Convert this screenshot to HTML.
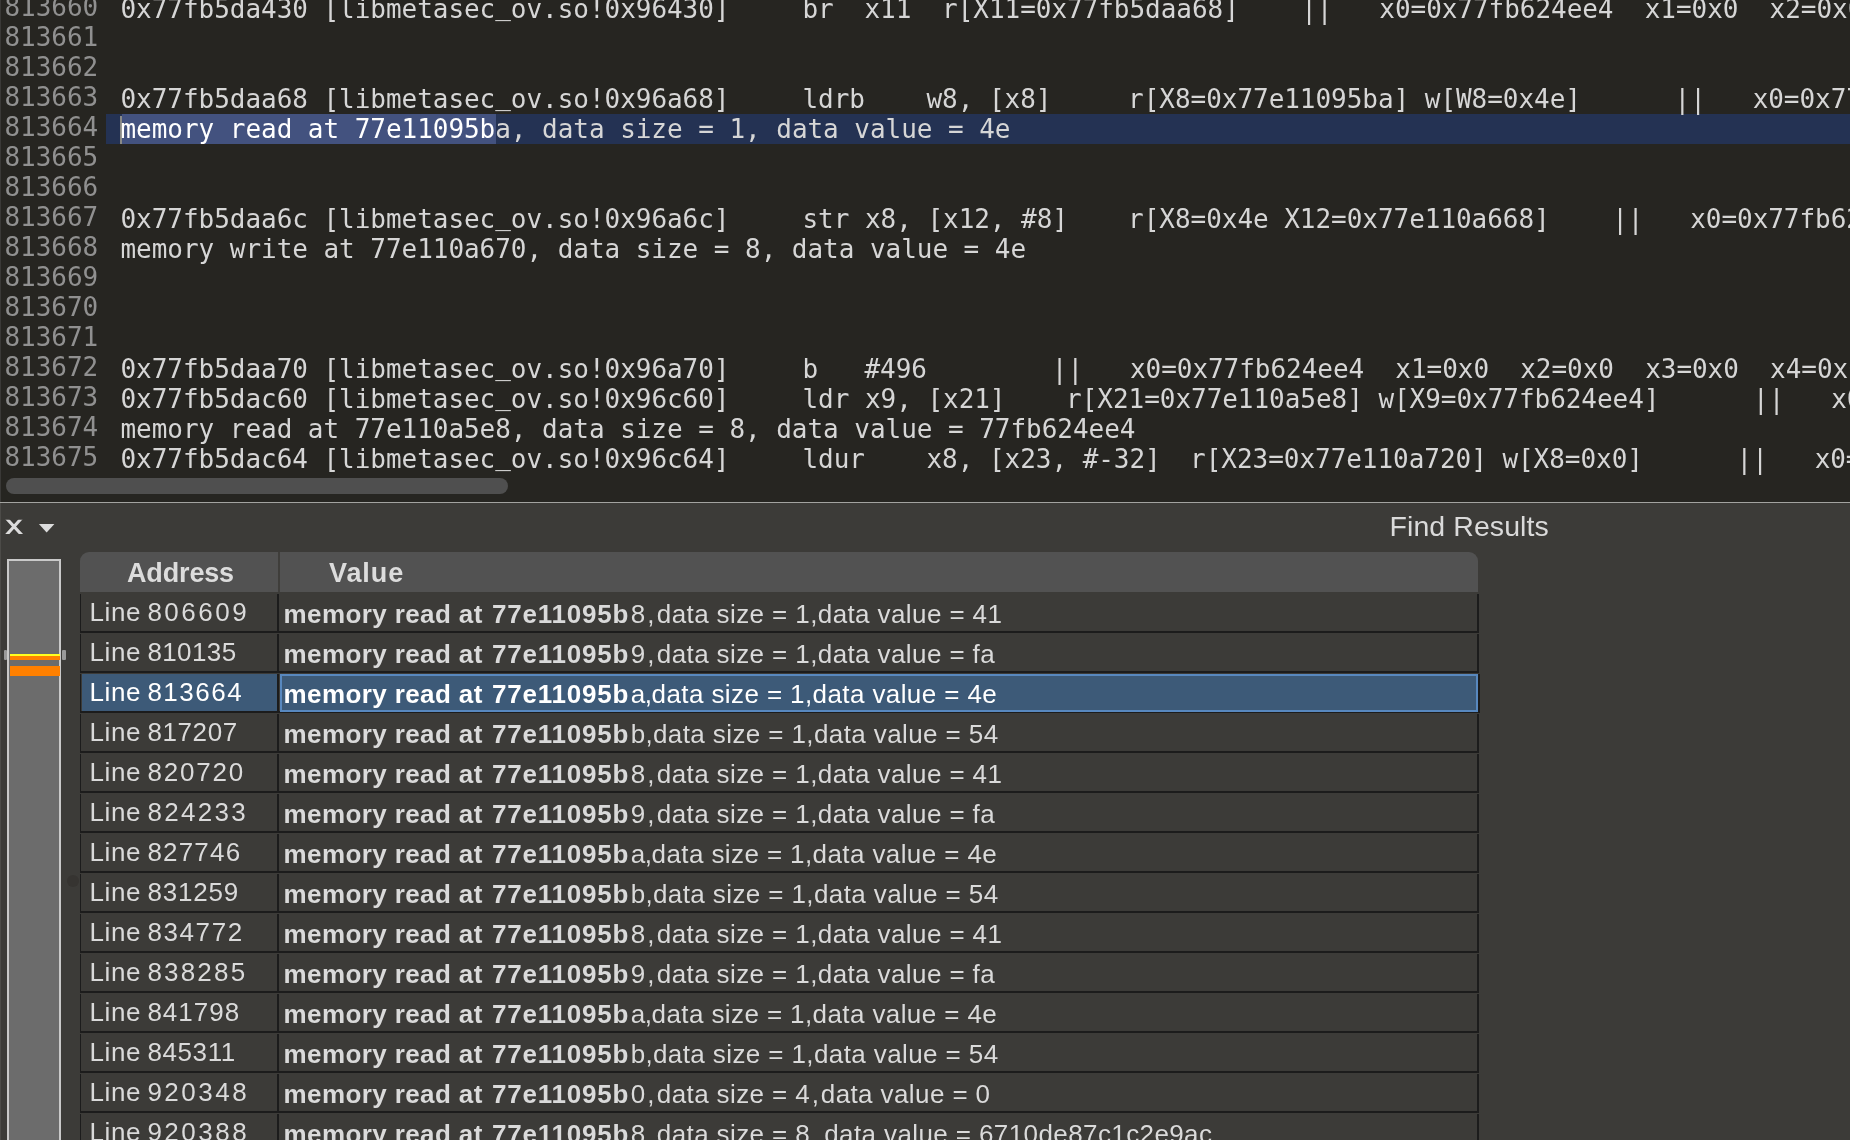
<!DOCTYPE html>
<html><head><meta charset="utf-8"><title>Find Results</title>
<style>
html,body{margin:0;padding:0}
body{width:1850px;height:1140px;overflow:hidden;position:relative;background:#3c3b38;font-family:"Liberation Sans",sans-serif}
#all{position:absolute;left:0;top:0;width:1850px;height:1140px;will-change:transform}
#ed{position:absolute;left:0;top:0;width:1850px;height:502px;background:#262521;overflow:hidden}
.ln,.tx{position:absolute;font-family:"DejaVu Sans Mono","Liberation Mono",monospace;font-size:26px;line-height:30px;height:30px;white-space:pre;letter-spacing:-0.04px}
.ln{left:4.5px;color:#909090;margin-top:-2px}
.tx{left:120.5px;color:#d6d6d6;tab-size:62px;-moz-tab-size:62px}
.us{position:relative;top:-3px}
#hl{position:absolute;left:106px;top:114px;width:1744px;height:30px;background:#243253}
#sel{position:absolute;left:121.5px;top:114px;width:374.5px;height:30px;background:#43527f}
#caret{position:absolute;left:120px;top:116px;width:2px;height:28px;background:#8a8a86}
#hs{position:absolute;left:6px;top:478px;width:502px;height:16px;border-radius:8px;background:#4f4f4f}
#edge1{position:absolute;left:0;top:0;width:1px;height:502px;background:#3a3937}
#edge2{position:absolute;left:0;top:503px;width:1px;height:637px;background:#4c4b48}
#sep{position:absolute;left:0;top:502px;width:1850px;height:1px;background:#a3a3a0}
#title{position:absolute;left:1389.5px;top:508px;font-size:28.5px;letter-spacing:.08px;line-height:36px;color:#dadada;white-space:pre}
#mm{position:absolute;left:7px;top:559px;width:50px;height:600px;border:2px solid #c9c9c9;background:#6c6c6c}
.or{position:absolute;left:10px;width:50px;background:#ff8000}
.hd{position:absolute;width:3.5px;top:650px;height:10px;background:#9a9a9a;border-radius:1px}
#th{position:absolute;left:80px;top:552px;width:1398px;height:40px;background:#525252;border-radius:9px 9px 0 0}
#thsep{position:absolute;left:278px;top:552px;width:2px;height:40px;background:#3f3e3b}
.h{position:absolute;top:552px;height:40px;line-height:42px;font-size:27px;font-weight:bold;color:#dcdcdc;white-space:pre;letter-spacing:.1px}
.r{position:absolute;left:80px;width:1399px;height:40px}
.r i{position:absolute;background:#1c1c1c;display:block}
.r .hb{left:0;top:38px;width:1399px;height:2px}
.r .v1{left:0;top:1px;width:1px;height:37px}
.r .v2{left:197px;top:1px;width:2px;height:37px}
.r .v3{left:1397px;top:1px;width:2px;height:37px}
.a,.v{position:absolute;white-space:pre;font-size:26px;color:#dadada;height:40px}
.a{left:9.5px;top:0;line-height:38px;letter-spacing:.6px;word-spacing:-1.5px}
.a span{letter-spacing:2.4px}
.v{left:203.5px;top:0;line-height:42px;letter-spacing:.4px}
.v u{text-decoration:none;letter-spacing:2.2px}
.v u.ca{letter-spacing:-.4px}
.v u.cb{letter-spacing:.3px}
.v b{letter-spacing:.4px;margin-right:1.5px}
.v b span{letter-spacing:.8px;margin-left:1.5px}
.s .a,.s .v{color:#fff}
.s .f1{position:absolute;left:2px;top:1px;width:195px;height:37.5px;background:#3d5a78}
.s .f2{position:absolute;left:200px;top:1px;width:1194px;height:34px;background:#3d5a78;border:2px solid #5888bf;z-index:2}
.s .v3{left:1398px;height:39px}
.a,.v{z-index:3}
</style></head><body>
<div id="all">
<div id="ed">
<div id="hl"></div><div id="sel"></div><div id="caret"></div>

<div class="ln" style="top:-6px">813660</div>
<div class="tx" style="top:-6px">0x77fb5da430 [libmetasec<span class="us">_</span>ov.so!0x96430]		br	x11	 r[X11=0x77fb5daa68]    ||   x0=0x77fb624ee4  x1=0x0  x2=0x0  x3=0x0</div>
<div class="ln" style="top:24px">813661</div>
<div class="ln" style="top:54px">813662</div>
<div class="ln" style="top:84px">813663</div>
<div class="tx" style="top:84px">0x77fb5daa68 [libmetasec<span class="us">_</span>ov.so!0x96a68]		ldrb	w8, [x8]	 r[X8=0x77e11095ba] w[W8=0x4e]      ||   x0=0x77fb624ee4</div>
<div class="ln" style="top:114px">813664</div>
<div class="tx" style="top:114px"><span style="color:#fff">memory read at 77e11095b</span>a, data size = 1, data value = 4e</div>
<div class="ln" style="top:144px">813665</div>
<div class="ln" style="top:174px">813666</div>
<div class="ln" style="top:204px">813667</div>
<div class="tx" style="top:204px">0x77fb5daa6c [libmetasec<span class="us">_</span>ov.so!0x96a6c]		str x8, [x12, #8]	 r[X8=0x4e X12=0x77e110a668]    ||   x0=0x77fb624ee4</div>
<div class="ln" style="top:234px">813668</div>
<div class="tx" style="top:234px">memory write at 77e110a670, data size = 8, data value = 4e</div>
<div class="ln" style="top:264px">813669</div>
<div class="ln" style="top:294px">813670</div>
<div class="ln" style="top:324px">813671</div>
<div class="ln" style="top:354px">813672</div>
<div class="tx" style="top:354px">0x77fb5daa70 [libmetasec<span class="us">_</span>ov.so!0x96a70]		b	#496        ||   x0=0x77fb624ee4  x1=0x0  x2=0x0  x3=0x0  x4=0x0</div>
<div class="ln" style="top:384px">813673</div>
<div class="tx" style="top:384px">0x77fb5dac60 [libmetasec<span class="us">_</span>ov.so!0x96c60]		ldr x9, [x21]	 r[X21=0x77e110a5e8] w[X9=0x77fb624ee4]      ||   x0=0x77fb624ee4</div>
<div class="ln" style="top:414px">813674</div>
<div class="tx" style="top:414px">memory read at 77e110a5e8, data size = 8, data value = 77fb624ee4</div>
<div class="ln" style="top:444px">813675</div>
<div class="tx" style="top:444px">0x77fb5dac64 [libmetasec<span class="us">_</span>ov.so!0x96c64]		ldur	x8, [x23, #-32]	 r[X23=0x77e110a720] w[X8=0x0]      ||   x0=0x77fb624ee4</div>
<div id="hs"></div><div id="edge1"></div>
</div>
<div id="sep"></div><div id="edge2"></div>
<svg style="position:absolute;left:4px;top:519px" width="52" height="17" viewBox="0 0 52 17"><defs><clipPath id="cx"><rect x="0" y="0.8" width="24" height="14.3"/></clipPath></defs><g clip-path="url(#cx)" stroke="#dcdcdc" stroke-width="3.1" fill="none"><path d="M2.13 -1 L18.75 17 M17.73 -1 L1.48 17"/></g><path d="M34.9 5 L50.4 5 L42.65 13.6 Z" fill="#dcdcdc"/></svg>
<div id="title">Find Results</div>
<div id="mm"></div>
<div class="or" style="top:654px;height:2px;background:#ffff20"></div>
<div class="or" style="top:656px;height:4px"></div>
<div class="or" style="top:666px;height:10px"></div>
<div class="hd" style="left:3.5px"></div><div class="hd" style="left:62px"></div>
<div style="position:absolute;left:67px;top:875px;width:12px;height:12px;border-radius:6px;background:#363431"></div>
<div id="th"></div><div id="thsep"></div>
<div class="h" style="left:127px;letter-spacing:-.15px">Address</div><div class="h" style="left:329px;letter-spacing:.9px">Value</div>

<div class="r" style="top:593px"><i class="hb"></i><i class="v1"></i><i class="v2"></i><i class="v3"></i><div class="a">Line <span style="letter-spacing:2.5px">806609</span></div><div class="v"><b>memory read at <span>77e11095b</span></b><u class="c8">8,</u>data size = 1,data value = 41</div></div>
<div class="r" style="top:633px"><i class="hb"></i><i class="v1"></i><i class="v2"></i><i class="v3"></i><div class="a">Line <span style="letter-spacing:0.4px">810135</span></div><div class="v"><b>memory read at <span>77e11095b</span></b><u class="c9">9,</u>data size = 1,data value = fa</div></div>
<div class="r s" style="top:673px"><div class="f1"></div><div class="f2"></div><i class="hb"></i><i class="v1"></i><i class="v2"></i><i class="v3"></i><div class="a">Line <span style="letter-spacing:1.52px">813664</span></div><div class="v"><b>memory read at <span>77e11095b</span></b><u class="ca">a,</u>data size = 1,data value = 4e</div></div>
<div class="r" style="top:713px"><i class="hb"></i><i class="v1"></i><i class="v2"></i><i class="v3"></i><div class="a">Line <span style="letter-spacing:0.6px">817207</span></div><div class="v"><b>memory read at <span>77e11095b</span></b><u class="cb">b,</u>data size = 1,data value = 54</div></div>
<div class="r" style="top:753px"><i class="hb"></i><i class="v1"></i><i class="v2"></i><i class="v3"></i><div class="a">Line <span style="letter-spacing:1.8px">820720</span></div><div class="v"><b>memory read at <span>77e11095b</span></b><u class="c8">8,</u>data size = 1,data value = 41</div></div>
<div class="r" style="top:793px"><i class="hb"></i><i class="v1"></i><i class="v2"></i><i class="v3"></i><div class="a">Line <span style="letter-spacing:2.32px">824233</span></div><div class="v"><b>memory read at <span>77e11095b</span></b><u class="c9">9,</u>data size = 1,data value = fa</div></div>
<div class="r" style="top:833px"><i class="hb"></i><i class="v1"></i><i class="v2"></i><i class="v3"></i><div class="a">Line <span style="letter-spacing:1.2px">827746</span></div><div class="v"><b>memory read at <span>77e11095b</span></b><u class="ca">a,</u>data size = 1,data value = 4e</div></div>
<div class="r" style="top:873px"><i class="hb"></i><i class="v1"></i><i class="v2"></i><i class="v3"></i><div class="a">Line <span style="letter-spacing:0.8px">831259</span></div><div class="v"><b>memory read at <span>77e11095b</span></b><u class="cb">b,</u>data size = 1,data value = 54</div></div>
<div class="r" style="top:913px"><i class="hb"></i><i class="v1"></i><i class="v2"></i><i class="v3"></i><div class="a">Line <span style="letter-spacing:1.6px">834772</span></div><div class="v"><b>memory read at <span>77e11095b</span></b><u class="c8">8,</u>data size = 1,data value = 41</div></div>
<div class="r" style="top:953px"><i class="hb"></i><i class="v1"></i><i class="v2"></i><i class="v3"></i><div class="a">Line <span style="letter-spacing:2.2px">838285</span></div><div class="v"><b>memory read at <span>77e11095b</span></b><u class="c9">9,</u>data size = 1,data value = fa</div></div>
<div class="r" style="top:993px"><i class="hb"></i><i class="v1"></i><i class="v2"></i><i class="v3"></i><div class="a">Line <span style="letter-spacing:1.0px">841798</span></div><div class="v"><b>memory read at <span>77e11095b</span></b><u class="ca">a,</u>data size = 1,data value = 4e</div></div>
<div class="r" style="top:1033px"><i class="hb"></i><i class="v1"></i><i class="v2"></i><i class="v3"></i><div class="a">Line <span style="letter-spacing:0.6px">845311</span></div><div class="v"><b>memory read at <span>77e11095b</span></b><u class="cb">b,</u>data size = 1,data value = 54</div></div>
<div class="r" style="top:1073px"><i class="hb"></i><i class="v1"></i><i class="v2"></i><i class="v3"></i><div class="a">Line <span style="letter-spacing:2.52px">920348</span></div><div class="v"><b>memory read at <span>77e11095b</span></b><u class="c0">0,</u>data size = <u style="letter-spacing:1.9px">4,</u>data value = 0</div></div>
<div class="r" style="top:1113px"><i class="hb"></i><i class="v1"></i><i class="v2"></i><i class="v3"></i><div class="a">Line <span style="letter-spacing:2.52px">920388</span></div><div class="v"><b>memory read at <span>77e11095b</span></b><u class="c8">8,</u>data size = <u style="letter-spacing:3.6px">8,</u>data value = 6710de87c1c2e9ac</div></div>
</div>
</body></html>
